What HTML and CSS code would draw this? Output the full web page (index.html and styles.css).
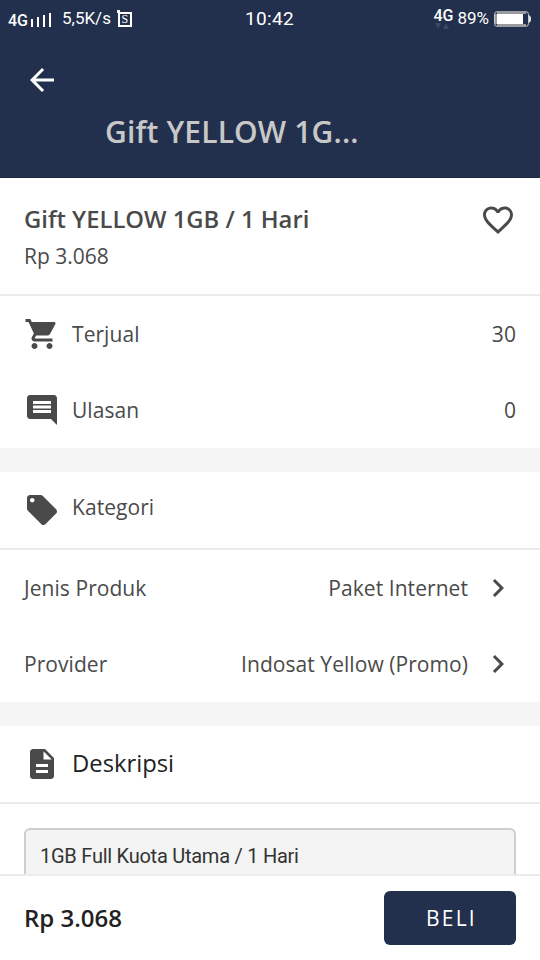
FILE: index.html
```html
<!DOCTYPE html>
<html lang="id">
<head>
<meta charset="utf-8">
<title>Gift YELLOW 1GB / 1 Hari</title>
<link rel="stylesheet" href="styles.css">
</head>
<body>
<div class="app">
  <header class="header">
    <div class="status">
      <div class="status-left">
        <span class="net">4G</span>
        <svg class="signal" width="21" height="14" viewBox="0 0 21 14" fill="#fff"><path d="M0 6h2v8H0zM6 4h2v10H6zM12 2h2v12h-2zM18 0h2v14h-2z"/></svg>
        <span class="speed">5,5K/s</span>
        <span class="sim">S</span>
      </div>
      <span class="clock">10:42</span>
      <div class="status-right">
        <span class="net">4G<svg class="traffic" width="14" height="6" viewBox="0 0 14 6" fill="#3b4963"><path d="M0 0h6L3 6zM8 6h6L11 0z"/></svg></span>
        <span class="percent">89%</span>
        <svg width="37" height="18" viewBox="0 0 37 18"><rect x=".5" y="1.500" width="34" height="15" rx="3" fill="#22304d" stroke="#c9cbcf"/><path d="M3 1h29v3H3zM3 14h29v3H3zM1 4h2v10H1z" fill="#999b9e"/><path d="M3 4h26v10H3z" fill="#fff"/><path d="M35 5l2 2v4l-2 2z" fill="#d8dade"/></svg>
      </div>
    </div>
    <svg class="back" width="36" height="36" viewBox="0 0 24 24" fill="#fff"><path d="M20 11H7.83l5.59-5.59L12 4l-8 8 8 8 1.41-1.41L7.83 13H20z"/></svg>
    <h1 class="page-title">Gift YELLOW 1G...</h1>
  </header>

  <main class="content">
    <section class="product">
      <div>
        <h2 class="name">Gift YELLOW 1GB / 1 Hari</h2>
        <p class="price">Rp 3.068</p>
      </div>
      <svg class="icon" viewBox="0 0 24 24"><path d="M16.5 3c-1.74 0-3.41.81-4.5 2.09C10.91 3.81 9.24 3 7.5 3 4.42 3 2 5.42 2 8.5c0 3.78 3.4 6.86 8.55 11.54L12 21.35l1.45-1.32C18.6 15.36 22 12.28 22 8.5 22 5.42 19.58 3 16.5 3zm-4.4 15.55l-.1.1-.1-.1C7.14 14.24 4 11.39 4 8.5 4 6.5 5.5 5 7.5 5c1.54 0 3.04.99 3.57 2.36h1.87C13.46 5.99 14.96 5 16.5 5c2 0 3.5 1.5 3.5 3.5 0 2.89-3.14 5.74-7.9 10.05z"/></svg>
    </section>

    <section class="group">
      <div class="row">
        <svg class="icon" viewBox="0 0 24 24"><path d="M7 18c-1.1 0-1.99.9-1.99 2S5.9 22 7 22s2-.9 2-2-.9-2-2-2zM1 2v2h2l3.6 7.59-1.35 2.45c-.16.28-.25.61-.25.96 0 1.1.9 2 2 2h12v-2H7.42c-.14 0-.25-.11-.25-.25l.03-.12.9-1.63h7.45c.75 0 1.41-.41 1.75-1.03l3.58-6.49c.08-.14.12-.31.12-.48 0-.55-.45-1-1-1H5.21l-.94-2H1zm16 16c-1.1 0-1.99.9-1.99 2s.89 2 1.99 2 2-.9 2-2-.9-2-2-2z"/></svg>
        <span class="label">Terjual</span>
        <span class="value">30</span>
      </div>
      <div class="row">
        <svg class="icon" viewBox="0 0 24 24"><path d="M21.99 4c0-1.1-.89-2-1.99-2H4c-1.1 0-2 .9-2 2v12c0 1.1.9 2 2 2h14l4 4-.01-18zM18 14H6v-2h12v2zm0-3H6V9h12v2zm0-3H6V6h12v2z"/></svg>
        <span class="label">Ulasan</span>
        <span class="value">0</span>
      </div>
    </section>

    <section class="group">
      <div class="row row-heading">
        <svg class="icon" viewBox="0 0 24 24"><path d="M21.41 11.58l-9-9C12.05 2.22 11.55 2 11 2H4c-1.1 0-2 .9-2 2v7c0 .55.22 1.05.59 1.42l9 9c.36.36.86.58 1.41.58s1.05-.22 1.41-.59l7-7c.37-.36.59-.86.59-1.41s-.23-1.06-.59-1.42zM5.500 7C4.670 7 4 6.330 4 5.500S4.670 4 5.500 4 7 4.670 7 5.500 6.330 7 5.500 7z"/></svg>
        <span class="label raised">Kategori</span>
      </div>
      <div class="row">
        <span class="label">Jenis Produk</span>
        <span class="value">Paket Internet</span>
        <svg class="chevron" viewBox="0 0 24 24"><path d="M10 6L8.590 7.410 13.170 12l-4.580 4.590L10 18l6-6z"/></svg>
      </div>
      <div class="row">
        <span class="label">Provider</span>
        <span class="value">Indosat Yellow (Promo)</span>
        <svg class="chevron" viewBox="0 0 24 24"><path d="M10 6L8.590 7.410 13.170 12l-4.580 4.590L10 18l6-6z"/></svg>
      </div>
    </section>

    <section class="group last">
      <div class="row row-heading">
        <svg class="icon" viewBox="0 0 24 24"><path d="M14 2H6c-1.100 0-1.990.9-1.990 2L4 20c0 1.100.89 2 1.990 2H18c1.100 0 2-.9 2-2V8l-6-6zm2 16H8v-2h8v2zm0-4H8v-2h8v2zm-3-5V3.500L18.500 9H13z"/></svg>
        <span class="label strong">Deskripsi</span>
      </div>
      <div class="description">1GB Full Kuota Utama / 1 Hari</div>
    </section>
  </main>

  <footer class="footer">
    <span class="total">Rp 3.068</span>
    <button class="buy" type="button">BELI</button>
  </footer>
</div>
</body>
</html>
```

FILE: styles.css
```css
* { box-sizing: border-box; }
body {
  margin: 0;
  font-family: "Open Sans", "Noto Sans", sans-serif;
  color: #4a4a4a;
  background: #fff;
}
h1, h2, p { margin: 0; }
svg { display: block; flex: none; }

.app {
  display: flex;
  flex-direction: column;
  width: 540px;
  height: 960px;
  overflow: hidden;
}

.header {
  flex: none;
  height: 178px;
  background: #22304d;
  color: #fff;
  border-bottom: 1px solid #1b2740;
}
.status {
  display: grid;
  grid-template-columns: 1fr auto 1fr;
  align-items: center;
  height: 37px;
  padding: 0 10px 0 8px;
  font-family: Roboto, sans-serif;
}
.status-left, .status-right { display: flex; align-items: center; }
.status-right { justify-content: flex-end; }
.net {
  position: relative;
  font: 500 16px/18px Roboto, sans-serif;
}
.status-left .net { padding-top: 4px; }
.status-right .net { margin: -6px 4px 0 0; }
.traffic { position: absolute; left: 2px; top: 16px; }
.signal { margin: 2px 0 0 3px; }
.speed { margin: -2px 0 0 10px; font-size: 17px; }
.sim {
  position: relative;
  width: 14px;
  height: 15px;
  margin: 2px 0 0 7px;
  border: 2px solid #fff;
  font: 12px/11px "Liberation Serif", serif;
  text-align: center;
}
.sim::before {
  content: "";
  position: absolute;
  left: -3px;
  top: -4px;
  width: 3px;
  height: 3px;
  background: #fff;
}
.clock { padding-left: 1px; font-size: 19px; letter-spacing: .3px; }
.percent { margin: -2px 5px 0 0; font-size: 17px; }
.status-right > svg { margin-right: -1px; }
.back { margin: 25px 0 0 24px; }
.page-title {
  margin: 12px 0 0 105px;
  font-size: 30px;
  line-height: 44px;
  font-weight: 600;
  letter-spacing: .15px;
  color: #c8c8c8;
}

.content { flex: 1; min-height: 0; overflow: hidden; }
.product {
  display: flex;
  justify-content: space-between;
  height: 118px;
  padding: 24px 24px 0;
  border-bottom: 2px solid #ececec;
}
.name { margin-top: -1px; font-size: 23.8px; line-height: 37px; font-weight: 600; }
.price { font-size: 21px; line-height: 36px; }
.icon, .chevron { width: 36px; height: 36px; fill: #4a4a4a; }

.group { border-bottom: 24px solid #f5f5f5; }
.group.last { border-bottom: 0; }
.row {
  display: flex;
  align-items: center;
  height: 76px;
  padding: 0 24px;
  font-size: 21px;
  letter-spacing: .06px;
}
.row-heading { height: 78px; border-bottom: 2px solid #ececec; }
.icon + .label { margin-left: 12px; }
.value { margin-left: auto; }
.chevron { margin: 0 0 0 12px; }
.raised { padding-bottom: 7px; }
.strong { padding-bottom: 3px; font-size: 23.800px; letter-spacing: 0; color: #222; }
.description {
  height: 120px;
  margin: 24px 24px 0;
  padding: 11px 14px;
  border: 2px solid #cecece;
  border-radius: 6px;
  background: #f4f4f4;
  color: #333;
  font: 20px/30px Roboto, sans-serif;
  letter-spacing: -.25px;
}

.footer {
  flex: none;
  display: flex;
  align-items: center;
  justify-content: space-between;
  height: 86px;
  padding: 0 24px;
  border-top: 2px solid #ececec;
}
.total { padding-bottom: 2px; font-size: 24px; font-weight: 600; color: #222; }
.buy {
  width: 132px;
  height: 54px;
  padding: 0 0 0 3px;
  border: 0;
  border-radius: 6px;
  background: #22304d;
  color: #fff;
  font: 21px/54px "Open Sans", sans-serif;
  letter-spacing: 2.200px;
}
```
